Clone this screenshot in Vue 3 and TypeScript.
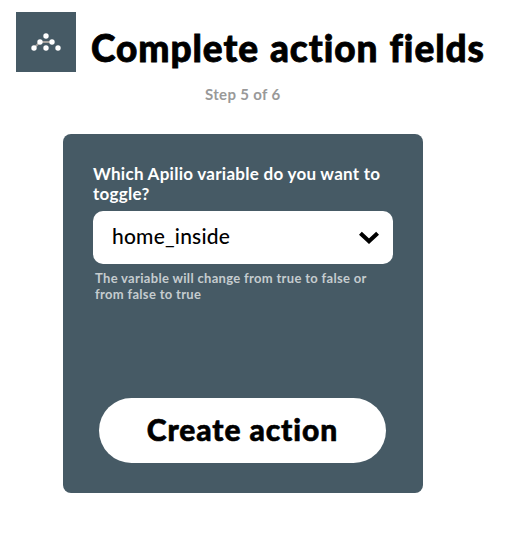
<script setup lang="ts">
import { ref } from 'vue'

const selected = ref('home_inside')
const dots: [number, number][] = [
  [30, 24], [24, 30], [36, 30], [18, 36], [30, 36], [42, 36],
]
</script>

<template>
  <main class="page">
    <header class="header">
      <svg class="logo" viewBox="0 0 60 60" aria-hidden="true">
        <rect width="60" height="60" fill="#465a65" />
        <path d="M18 36L24 30H36" fill="none" stroke="#a5a29e" stroke-width="1.8" />
        <circle v-for="([x, y], i) in dots" :key="i" :cx="x" :cy="y" r="2.7" fill="#fff" />
      </svg>
      <h1 class="title">Complete action fields</h1>
    </header>
    <p class="step">Step 5 of 6</p>
    <form class="card" @submit.prevent>
      <div class="label">Which Apilio variable do you want to<br />toggle?</div>
      <div class="select" role="combobox" tabindex="0">
        <span class="value">{{ selected }}</span>
        <svg class="chevron" viewBox="0 0 20 14" aria-hidden="true">
          <path d="M1.4 2.2L10 10.2L18.6 2.2" fill="none" stroke="#000" stroke-width="4.2" />
        </svg>
      </div>
      <p class="help">The variable will change from true to false or<br />from false to true</p>
      <button class="create" type="submit">Create action</button>
    </form>
  </main>
</template>

<style>
body {
  background: #fff;
}
</style>

<style scoped>
.page {
  box-sizing: border-box;
  width: 518px;
  height: 537px;
  padding-top: 12px;
  font-family: Lato, "Liberation Sans", sans-serif;
  font-weight: 700;
  font-variant-ligatures: none;
  white-space: nowrap;
}
.header {
  display: flex;
  height: 60px;
  padding-left: 16px;
}
.logo {
  flex: none;
  width: 60px;
  height: 60px;
}
.title {
  margin: 12px 0 0 15px;
  font-size: 37px;
  line-height: 48px;
  font-weight: 900;
  letter-spacing: 0.95px;
  word-spacing: 1.3px;
  color: #000;
  -webkit-text-stroke: 0.8px #000;
}
.step {
  margin: 12px 0 0 205px;
  font-size: 15px;
  line-height: 20px;
  letter-spacing: 0.33px;
  color: #999;
}
.card {
  box-sizing: border-box;
  width: 360px;
  height: 359px;
  margin: 30px 0 0 63px;
  padding: 30px 30px 0;
  border-radius: 8px;
  background: #465a65;
}
.label {
  font-size: 17px;
  line-height: 20px;
  letter-spacing: 0.27px;
  color: #fff;
}
.select {
  display: flex;
  align-items: center;
  justify-content: space-between;
  box-sizing: border-box;
  height: 53px;
  margin-top: 7px;
  padding: 0 14px 0 19px;
  border-radius: 10px;
  background: #fff;
}
.value {
  padding-bottom: 3px;
  font-size: 21px;
  line-height: 28px;
  font-weight: 500;
  letter-spacing: 0.2px;
  color: #000;
}
.chevron {
  width: 20px;
  height: 14px;
}
.help {
  margin: 6px 0 0 2px;
  font-size: 13px;
  line-height: 16px;
  letter-spacing: 0.32px;
  color: #c5cccf;
}
.create {
  display: flex;
  align-items: center;
  justify-content: center;
  box-sizing: border-box;
  width: 287px;
  height: 65px;
  margin: 96px 0 0 6px;
  padding: 0 0 4px;
  border: 0;
  border-radius: 33px;
  background: #fff;
  color: #000;
  font: 900 30px/40px Lato, "Liberation Sans", sans-serif;
  font-variant-ligatures: none;
  letter-spacing: 0.9px;
  -webkit-text-stroke: 0.6px #000;
}
</style>
